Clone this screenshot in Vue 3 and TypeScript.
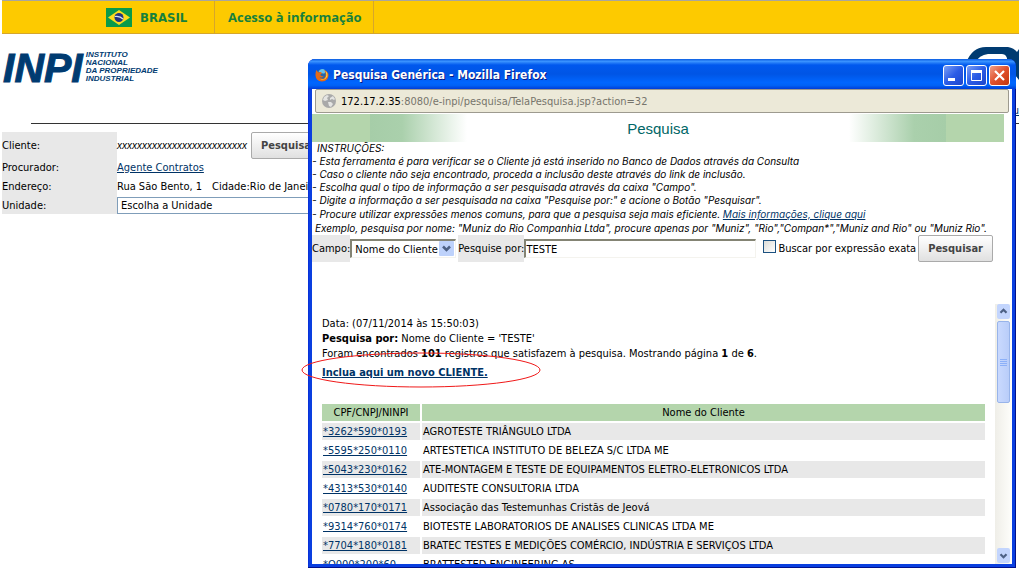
<script setup lang="ts">
import { ref } from 'vue'

interface Client {
  id: string
  name: string
}

const clients: Client[] = [
  { id: '*3262*590*0193', name: 'AGROTESTE TRIÂNGULO LTDA' },
  { id: '*5595*250*0110', name: 'ARTESTETICA INSTITUTO DE BELEZA S/C LTDA ME' },
  { id: '*5043*230*0162', name: 'ATE-MONTAGEM E TESTE DE EQUIPAMENTOS ELETRO-ELETRONICOS LTDA' },
  { id: '*4313*530*0140', name: 'AUDITESTE CONSULTORIA LTDA' },
  { id: '*0780*170*0171', name: 'Associação das Testemunhas Cristãs de Jeová' },
  { id: '*9314*760*0174', name: 'BIOTESTE LABORATORIOS DE ANALISES CLINICAS LTDA ME' },
  { id: '*7704*180*0181', name: 'BRATEC TESTES E MEDIÇÕES COMÉRCIO, INDÚSTRIA E SERVIÇOS LTDA' },
  { id: '*O000*200*60', name: 'BRATTESTED ENGINEERING AS' },
]

const term = ref('TESTE')
const exact = ref(false)
</script>

<template>
  <div class="page">
    <header class="gov-bar">
      <a class="gov-brand" href="#">
        <svg class="flag" viewBox="0 0 26 19" aria-hidden="true">
          <rect width="26" height="19" fill="#0a9a4a" />
          <path d="M13 2 24 9.500 13 17 2 9.500z" fill="#fcdc1c" />
          <circle cx="13" cy="9.500" r="4.500" fill="#24357e" />
          <path d="M8.800 8.500q5-1 8.200 2.500" fill="none" stroke="#d5dff0" stroke-width="1.200" />
        </svg>
        <span>BRASIL</span>
      </a>
      <a class="gov-link" href="#">Acesso à informação</a>
    </header>

    <div class="brand-row">
      <div class="inpi">
        <span class="inpi-mark">INPI</span>
        <span class="inpi-name">INSTITUTO<br />NACIONAL<br />DA PROPRIEDADE<br />INDUSTRIAL</span>
      </div>
      <svg class="emblem" viewBox="0 0 53 42" aria-hidden="true">
        <path d="M0 16Q6 0 20 0H42Q48 1 51 5L53 2V33L49 28 41 16Q42 7 36 7H22Q13 8 9 16z" fill="#003b71" />
      </svg>
    </div>
    <div class="rule-row"><a href="#">u</a></div>

    <form class="request" @submit.prevent>
      <span class="label tall">Cliente:</span>
      <div class="value tall">
        <i class="masked">xxxxxxxxxxxxxxxxxxxxxxxxxx</i>
        <button class="btn" type="button">Pesquisar</button>
      </div>
      <span class="label">Procurador:</span>
      <div class="value"><a href="#">Agente Contratos</a></div>
      <span class="label mid">Endereço:</span>
      <div class="value mid"><span>Rua São Bento, 1</span><span class="city">Cidade:Rio de Janeiro</span></div>
      <label class="label last" for="unit">Unidade:</label>
      <div class="value last">
        <select id="unit" class="unit"><option>Escolha a Unidade</option></select>
      </div>
    </form>

    <section class="window">
      <div class="titlebar">
        <svg class="firefox" viewBox="0 0 16 16" aria-hidden="true">
          <circle cx="8" cy="8" r="7" fill="#2867a8" />
          <path d="M4 4Q6 0 10 1.500 13 3 11 6 8 7 4 4" fill="#63c2ee" />
          <path d="M2 2Q2 4 4 5 7 4 8 6 6 7 6 8 7 10 10 9 8 12 5 10 7 13 10 12 13 10 12 5 11 3 10 2 15 4 15.500 8 15 15 8 15.500 1 15 .5 8 .5 4 2 2" fill="#e66a16" />
          <path d="M12 3Q15 6 14 10 11 15 6 13 12 14 13 8z" fill="#ffd044" />
        </svg>
        <h1>Pesquisa Genérica - Mozilla Firefox</h1>
        <div class="controls">
          <button type="button" aria-label="Minimizar">
            <svg viewBox="0 0 19 19"><path d="M4 12h7v3H4z" fill="#fff" /></svg>
          </button>
          <button type="button" aria-label="Maximizar">
            <svg viewBox="0 0 19 19"><path d="M4.500 5v9.500h10V5" fill="none" stroke="#fff" /><path d="M4 4h11v3H4z" fill="#fff" /></svg>
          </button>
          <button class="close" type="button" aria-label="Fechar">
            <svg viewBox="0 0 19 19"><path d="m5 5 9 9m0-9-9 9" stroke="#fff" stroke-width="2.200" /></svg>
          </button>
        </div>
      </div>

      <div class="client">
        <div class="address">
          <svg class="globe" viewBox="0 0 14 14" aria-hidden="true">
            <circle cx="7" cy="7" r="7" fill="#a9a9a9" />
            <path d="M2 3 5 1 7 2 5 4 6 6 3 7 1 6zM8 4l3-2 2 3-1 1-2-1-2 1zM6 8l3 0 2 2-2 3-2-1z" fill="#e4e4e2" />
          </svg>
          <span class="host">172.17.2.35</span><span>:8080/e-inpi/pesquisa/TelaPesquisa.jsp?action=32</span>
        </div>

        <h2 class="banner">Pesquisa</h2>

        <div class="help">
          <p class="first">INSTRUÇÕES:</p>
          <p>- Esta ferramenta é para verificar se o Cliente já está inserido no Banco de Dados através da Consulta</p>
          <p>- Caso o cliente não seja encontrado, proceda a inclusão deste através do link de inclusão.</p>
          <p>- Escolha qual o tipo de informação a ser pesquisada através da caixa "Campo".</p>
          <p>- Digite a informação a ser pesquisada na caixa "Pesquise por:" e acione o Botão "Pesquisar".</p>
          <p class="more">- Procure utilizar expressões menos comuns, para que a pesquisa seja mais eficiente. <a href="#">Mais informações, clique aqui</a></p>
          <p class="example">Exemplo, pesquisa por nome: "Muniz do Rio Companhia Ltda", procure apenas por "Muniz", "Rio","Compan*","Muniz and Rio" ou "Muniz Rio".</p>
        </div>

        <form class="search" @submit.prevent>
          <label class="tag" for="field">Campo:</label>
          <div class="picker">
            <select id="field"><option>Nome do Cliente</option></select>
            <svg viewBox="0 0 15 15" aria-hidden="true">
              <rect width="15" height="15" rx="1" fill="#bed2fb" />
              <path d="m4 5.500 3.500 3.500L11 5.500" fill="none" stroke="#4d6185" stroke-width="2.500" />
            </svg>
          </div>
          <label class="tag" for="term">Pesquise por:</label>
          <input id="term" v-model="term" class="term" type="text" />
          <label class="exact"><input v-model="exact" type="checkbox" />Buscar por expressão exata</label>
          <button class="btn" type="submit">Pesquisar</button>
        </form>

        <div class="results">
          <div class="list">
            <p>Data: (07/11/2014 às 15:50:03)</p>
            <p><b>Pesquisa por:</b> Nome do Cliente = 'TESTE'</p>
            <p>Foram encontrados <b>101</b> registros que satisfazem à pesquisa. Mostrando página <b>1</b> de <b>6</b>.</p>
            <p class="include"><a href="#">Inclua aqui um novo CLIENTE.</a></p>
            <table>
              <thead>
                <tr><th class="code">CPF/CNPJ/NINPI</th><th>Nome do Cliente</th></tr>
              </thead>
              <tbody>
                <tr v-for="c in clients" :key="c.id">
                  <td><a href="#">{{ c.id }}</a></td>
                  <td>{{ c.name }}</td>
                </tr>
              </tbody>
            </table>
          </div>
          <div class="scroll" aria-hidden="true">
            <svg class="arrow" viewBox="0 0 15 15"><path d="m4 9 3.500-3.500L11 9" /></svg>
            <div class="thumb"><i></i><i></i><i></i><i></i></div>
            <svg class="arrow down" viewBox="0 0 15 15"><path d="m4 6 3.500 3.500L11 6" /></svg>
          </div>
        </div>
      </div>
    </section>

    <svg class="marker" viewBox="0 0 240 36" aria-hidden="true">
      <ellipse cx="120" cy="18" rx="119" ry="17" fill="none" stroke="#f01818" />
    </svg>
  </div>
</template>

<style>
body {
  margin: 0;
  background: #fff;
}
</style>

<style scoped>
.page {
  position: relative;
  min-height: 100vh;
  overflow: hidden;
  font: 11px/15px "DejaVu Sans Condensed", Tahoma, sans-serif;
  color: #000;
}
* {
  box-sizing: border-box;
}
a {
  color: #003366;
}
p,
h1,
h2 {
  margin: 0;
}
button,
input,
select {
  font: inherit;
  color: inherit;
  margin: 0;
}

/* government bar */
.gov-bar {
  display: flex;
  height: 34px;
  margin-left: 2px;
  background: #fdca00;
  border-top: 1px solid #a9a69c;
  border-bottom: 1px solid #d5a62c;
}
.gov-bar a {
  display: flex;
  align-items: center;
  color: #16803c;
  font-weight: bold;
  text-decoration: none;
  border-right: 1px solid #d5a62c;
}
.gov-brand {
  width: 213px;
  padding-left: 104px;
  gap: 8px;
  font-size: 13px;
}
.gov-bar .gov-link {
  padding: 0 11px 0 13px;
  font: bold 13px/15px "Open Sans", Verdana, sans-serif;
}
.flag {
  width: 26px;
  height: 19px;
}

/* institutional logo */
.brand-row {
  display: flex;
  justify-content: space-between;
  height: 69px;
  padding: 13px 0 0 3px;
}
.inpi {
  display: flex;
  gap: 3px;
  padding-top: 4px;
  color: #003b71;
  font-family: "Liberation Sans", Arial, sans-serif;
  font-style: italic;
  font-weight: bold;
}
.inpi-mark {
  font-size: 41px;
  line-height: 34px;
  -webkit-text-stroke: 1px #003b71;
}
.inpi-name {
  font-size: 8px;
  line-height: 8px;
}
.emblem {
  width: 53px;
  height: 42px;
}
.rule-row {
  height: 21px;
  margin-left: 31px;
  border-bottom: 1px solid #333;
  text-align: right;
}

/* request form */
.request {
  display: grid;
  grid-template-columns: 115px 1fr;
  padding: 8px 0 0 2px;
}
.label {
  display: flex;
  align-items: center;
  height: 17px;
  background: #e8e8e8;
}
.value {
  display: flex;
  align-items: center;
  height: 17px;
  white-space: nowrap;
}
.tall {
  height: 27px;
}
.mid {
  height: 20px;
}
.last {
  height: 18px;
}
.masked {
  width: 134px;
  font: italic 10px/15px "Liberation Sans", Arial, sans-serif;
}
.city {
  margin-left: 10px;
}
.unit {
  width: 300px;
  height: 17px;
  padding: 0 3px;
  border: 1px solid #7f9db9;
  background: #fff;
  appearance: none;
}
.btn {
  height: 27px;
  padding: 0 9px;
  border: 1px solid #aaa;
  border-radius: 2px;
  background: linear-gradient(#fff, #e0e0e0);
  color: #444;
  font-weight: bold;
}

/* popup window */
.window {
  position: absolute;
  top: 59px;
  right: 3px;
  bottom: 4px;
  left: 308px;
  display: flex;
  flex-direction: column;
  padding: 0 4px 4px;
  background: #0a3fe0;
  border-radius: 7px 7px 0 0;
  box-shadow: inset -1px -1px #00108c, inset 1px 0 #0831d9;
  overflow: hidden;
}
.titlebar {
  display: flex;
  align-items: center;
  height: 30px;
  margin: 0 -4px;
  padding: 2px 6px 0 7px;
  gap: 4px;
  background: linear-gradient(#0a5be0, #3a93ff 8%, #0058ee 20%, #0055e5 50%, #0066ff 78%, #0062f6 88%, #003dd7);
}
.firefox {
  width: 14px;
  height: 14px;
}
.titlebar h1 {
  flex: 1;
  color: #fff;
  font-size: 12px;
  line-height: 16px;
  text-shadow: 1px 1px #0a1883;
}
.controls {
  display: flex;
  gap: 2px;
}
.controls button {
  width: 21px;
  height: 21px;
  padding: 0;
  border: 1px solid #fff;
  border-radius: 3px;
  background: linear-gradient(135deg, #7ca0f5, #2b5ce6 50%, #1c46cc);
}
.controls .close {
  background: linear-gradient(135deg, #f0a088, #e0502c 50%, #c4370d);
}
.controls svg {
  display: block;
  width: 19px;
  height: 19px;
}
.client {
  display: flex;
  flex: 1;
  flex-direction: column;
  min-height: 0;
  background: #fff;
}
.address {
  display: flex;
  align-items: center;
  height: 24px;
  margin: 0 3px 1px;
  padding: 0 6px;
  background: #ece9d8;
  border: 1px solid #9d9a8f;
  border-radius: 2px;
  color: #77756c;
}
.globe {
  width: 14px;
  height: 14px;
  margin-right: 5px;
}
.host {
  color: #000;
}
.banner {
  height: 28px;
  margin-right: 8px;
  background: linear-gradient(
    90deg,
    #b4d5ac 58px,
    #a6cda8 58px,
    #aad0ac 90px,
    #fff 155px,
    #fff calc(100% - 155px),
    #aad0ac calc(100% - 90px),
    #a6cda8 calc(100% - 58px),
    #b4d5ac calc(100% - 58px)
  );
  color: #006666;
  font: 15px/29px "Liberation Sans", Arial, sans-serif;
  text-align: center;
}

/* instructions */
.help {
  font: italic 10px/13px Inter, Verdana, sans-serif;
  white-space: nowrap;
}
.help .first {
  padding-left: 5px;
}
.help .more {
  line-height: 15px;
}
.help .example {
  padding-left: 3px;
}

/* search form */
.search {
  display: flex;
  align-items: center;
  height: 27px;
  white-space: nowrap;
}
.tag {
  display: flex;
  align-items: center;
  height: 27px;
  background: #e8e8e8;
}
.picker {
  position: relative;
  width: 106px;
  margin-right: 2px;
}
.picker select {
  display: block;
  width: 100%;
  height: 19px;
  padding: 0 3px;
  border: solid #f4f3ee;
  border-width: 2px 1px 1px 2px;
  border-top-color: #848474;
  border-left-color: #848474;
  background: #fff;
  appearance: none;
}
.picker svg {
  position: absolute;
  top: 2px;
  right: 2px;
  width: 15px;
  height: 15px;
  pointer-events: none;
}
.term {
  width: 232px;
  height: 19px;
  padding: 0;
  border: solid #f4f3ee;
  border-width: 2px 1px 1px 2px;
  border-top-color: #848474;
  border-left-color: #848474;
}
.exact {
  display: flex;
  align-items: center;
  gap: 2px;
  margin: 0 2px 0 7px;
}
.exact input {
  width: 13px;
  height: 13px;
  margin-bottom: 5px;
  border: 1px solid #1c5180;
  background: linear-gradient(135deg, #dcdcd7, #fff);
  appearance: none;
}

/* results */
.results {
  display: flex;
  flex: 1;
  min-height: 0;
  margin-top: 42px;
}
.list {
  flex: 1;
  min-width: 0;
  padding: 12px 8px 0;
  overflow: hidden;
}
.list p {
  padding-left: 2px;
}
.list .include {
  margin: 3px 0 21px;
  line-height: 17px;
  font-weight: bold;
}
table {
  width: 100%;
  border-spacing: 2px;
}
th,
td {
  padding: 1px;
}
th {
  background: #b4d5ac;
  font-weight: normal;
}
.code {
  width: 98px;
}
tbody tr:nth-child(odd) td {
  background: #e8e8e8;
}
.scroll {
  display: flex;
  flex-direction: column;
  width: 17px;
  padding: 0 2px;
  background: linear-gradient(90deg, #efeee8, #fefefb);
}
.arrow {
  width: 13px;
  height: 15px;
  background: #c3d5fd;
  border-radius: 2px;
}
.arrow path {
  fill: none;
  stroke: #4d6185;
  stroke-width: 2.5;
}
.arrow.down {
  margin-top: auto;
  margin-bottom: 1px;
}
.thumb {
  display: flex;
  flex-direction: column;
  align-items: center;
  justify-content: center;
  gap: 1px;
  height: 82px;
  margin-top: 2px;
  background: linear-gradient(90deg, #c9d9fe, #b9cdf9);
  border: 1px solid #98b4ea;
  border-radius: 2px;
}
.thumb i {
  width: 7px;
  height: 1px;
  background: #8cb0f8;
}

/* hand-drawn highlight around the inclusion link */
.marker {
  position: absolute;
  top: 352px;
  left: 301px;
  width: 240px;
  height: 36px;
  pointer-events: none;
}
</style>
